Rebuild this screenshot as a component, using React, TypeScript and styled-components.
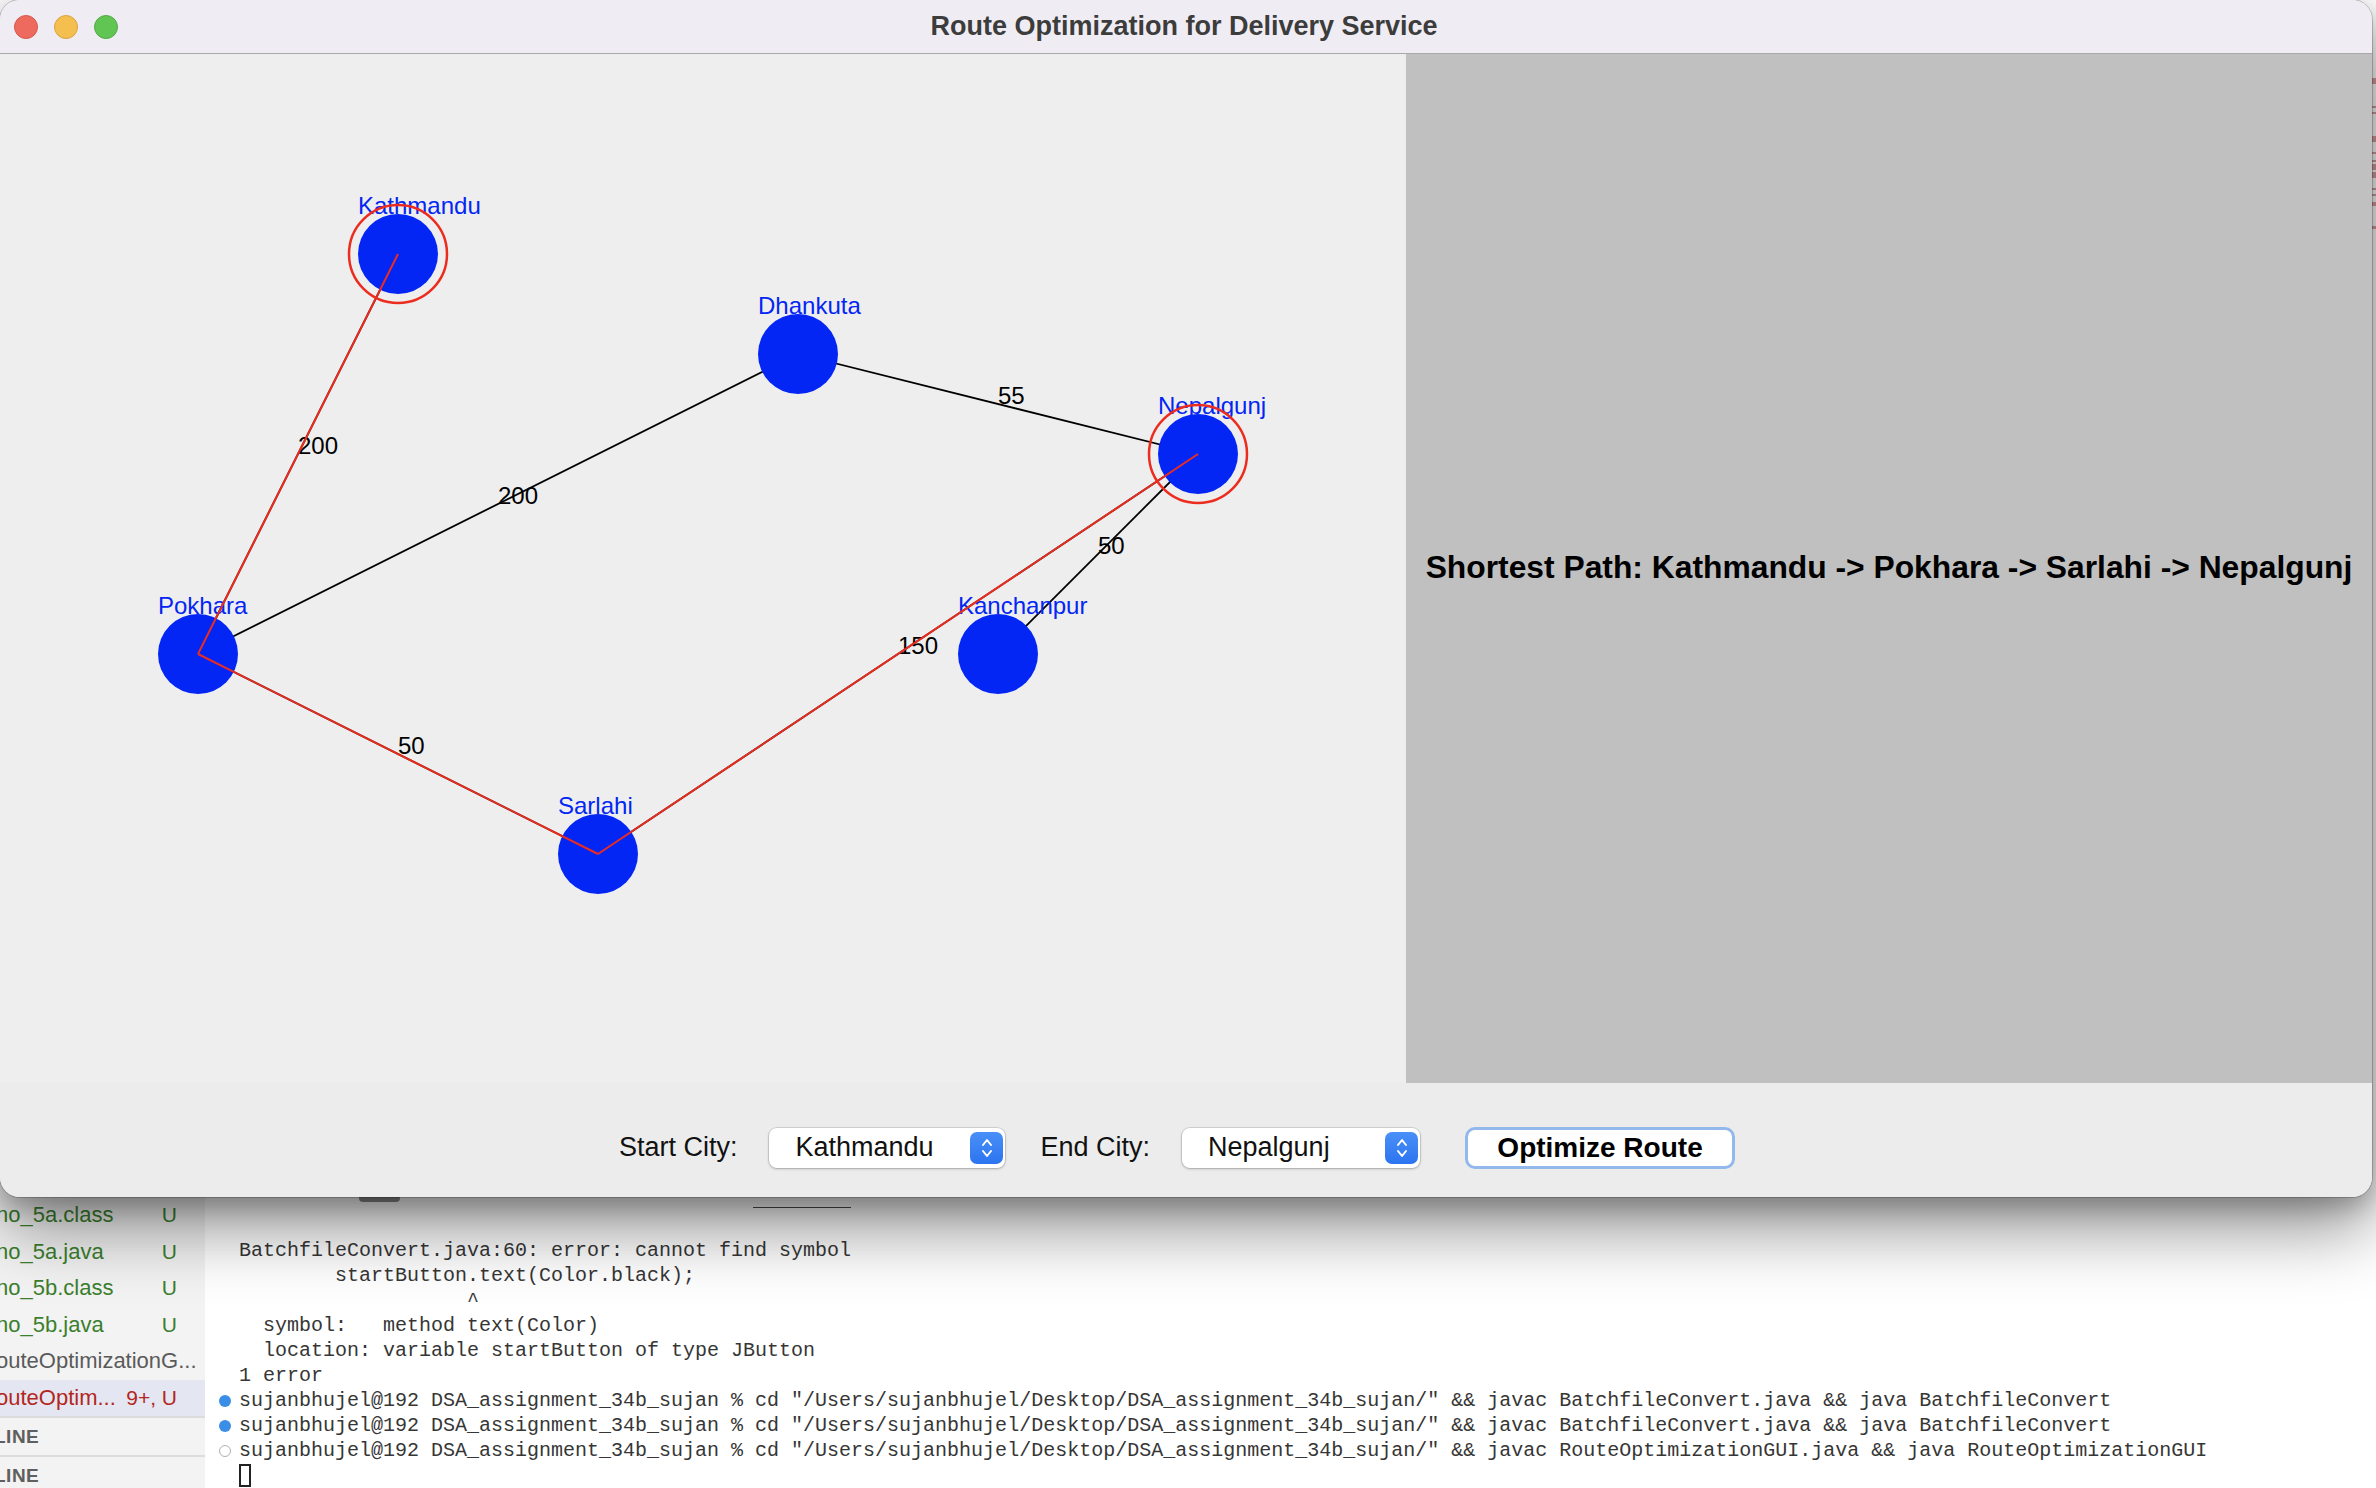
import React from "react";
import styled, { createGlobalStyle } from "styled-components";

const GlobalStyle = createGlobalStyle`
  html, body {
    margin: 0;
    padding: 0;
  }
  body {
    width: 2376px;
    height: 1488px;
    overflow: hidden;
    background: #ffffff;
    font-family: "Liberation Sans", Arial, sans-serif;
  }
`;

const Screen = styled.div`
  position: relative;
  width: 2376px;
  height: 1488px;
  overflow: hidden;
  background: #ffffff;
`;

/* ---------- editor behind the window ---------- */

const Workbench = styled.div`
  display: flex;
  flex-direction: column;
  height: 100%;
`;

const EditorArea = styled.div`
  height: 1197px;
  flex: 0 0 1197px;
  display: flex;
  justify-content: flex-end;
  background: #ffffff;
`;

const Minimap = styled.div`
  width: 4px;
  display: flex;
  flex-direction: column;
  padding-top: 78px;
`;

const MinimapMark = styled.div<{ $top: number; $h: number }>`
  margin-top: ${(p) => p.$top}px;
  height: ${(p) => p.$h}px;
  background: #d6a1a1;
`;

const PanelRow = styled.div`
  flex: 1;
  display: grid;
  grid-template-columns: 205px 1fr;
  min-height: 0;
`;

const Sidebar = styled.div`
  background: #f3f3f3;
  display: flex;
  flex-direction: column;
  padding-top: 198px;
  margin-top: -198px;
  overflow: hidden;
`;

const FileRow = styled.div<{ $active?: boolean }>`
  height: 36.5px;
  flex-shrink: 0;
  display: flex;
  align-items: center;
  justify-content: space-between;
  padding-right: 28px;
  background: ${(p) => (p.$active ? "#e4e6f1" : "transparent")};
  font-size: 22px;
  white-space: nowrap;
`;

const FileName = styled.span<{ $color: string }>`
  margin-left: -4px;
  flex-shrink: 0;
  color: ${(p) => p.$color};
`;

const Badge = styled.span<{ $color: string }>`
  color: ${(p) => p.$color};
  font-size: 21px;
`;

const SectionHeader = styled.div`
  height: 37px;
  flex-shrink: 0;
  display: flex;
  align-items: center;
  border-top: 2px solid #dcdcdc;
  margin-left: -6px;
  font-size: 19px;
  font-weight: bold;
  color: #5f5f5f;
  letter-spacing: 0.5px;
`;

const Terminal = styled.div`
  background: #ffffff;
  display: flex;
  flex-direction: column;
  font-family: "Liberation Mono", "DejaVu Sans Mono", monospace;
  font-size: 20px;
  color: #363636;
`;

const TerminalTop = styled.div`
  height: 11px;
  flex-shrink: 0;
  display: flex;
`;

const Sash = styled.div`
  margin-left: 154px;
  width: 41px;
  height: 5px;
  border-radius: 0 0 4px 4px;
  background: #8a8a8a;
`;

const TabUnderline = styled.div`
  margin-left: 353px;
  align-self: flex-end;
  width: 98px;
  height: 1.5px;
  background: #4a4a4a;
`;

const TerminalBody = styled.div`
  padding: 30px 0 0 10px;
`;

const TermLine = styled.div`
  height: 25px;
  display: flex;
  align-items: center;
  white-space: pre;
`;

const Gutter = styled.div`
  width: 24px;
  display: flex;
  justify-content: center;
  align-items: center;
  margin-left: -2px;
  margin-right: 2px;
`;

const Dot = styled.div<{ $hollow?: boolean }>`
  width: 12px;
  height: 12px;
  border-radius: 50%;
  box-sizing: border-box;
  background: ${(p) => (p.$hollow ? "transparent" : "#3a8ee6")};
  border: ${(p) => (p.$hollow ? "1.5px solid #b0b0b0" : "none")};
`;

const Cursor = styled.div`
  width: 12px;
  height: 23px;
  box-sizing: border-box;
  border: 2px solid #222;
`;

/* ---------- the Java window ---------- */

const Window = styled.div`
  position: absolute;
  top: 0;
  left: 0;
  width: 2372px;
  height: 1197px;
  border-radius: 20px;
  overflow: hidden;
  display: flex;
  flex-direction: column;
  background: #ececec;
  box-shadow: 0 0 0 1px rgba(0, 0, 0, 0.2), 0 30px 70px rgba(0, 0, 0, 0.45),
    0 10px 24px rgba(0, 0, 0, 0.22);
`;

const TitleBar = styled.div`
  height: 53px;
  flex: 0 0 53px;
  display: grid;
  grid-template-columns: 1fr auto 1fr;
  align-items: center;
  background: #efedf3;
  border-bottom: 1px solid #a8a8a8;
`;

const Lights = styled.div`
  display: flex;
  gap: 16px;
  padding-left: 14px;
`;

const Light = styled.div<{ $fill: string; $edge: string }>`
  width: 24px;
  height: 24px;
  border-radius: 50%;
  box-sizing: border-box;
  background: ${(p) => p.$fill};
  border: 1px solid ${(p) => p.$edge};
`;

const Title = styled.div`
  font-size: 27px;
  font-weight: bold;
  color: #3c3c3c;
  margin-left: -4px;
`;

const Body = styled.div`
  flex: 0 0 1025px;
  display: flex;
`;

const GraphPanel = styled.div`
  flex: 1;
  background: #eeeeee;
  overflow: hidden;
`;

const PathPanel = styled.div`
  width: 966px;
  background: #c0c0c0;
  display: flex;
  align-items: center;
  justify-content: center;
`;

const PathText = styled.div`
  font-size: 31.8px;
  font-weight: bold;
  color: #000;
  white-space: nowrap;
  padding-bottom: 2px;
`;

const ControlBar = styled.div`
  flex: 1;
  display: flex;
  align-items: center;
  justify-content: center;
  gap: 32px;
  padding: 15px 18px 0 0;
  background: #ececec;
`;

const FieldLabel = styled.span<{ $extra?: number }>`
  margin-left: ${(p) => p.$extra ?? 0}px;
  font-size: 27px;
  color: #111;
`;

const Combo = styled.div<{ $w: number }>`
  width: ${(p) => p.$w}px;
  height: 40px;
  box-sizing: border-box;
  display: flex;
  align-items: center;
  justify-content: space-between;
  padding: 0 2px 0 26px;
  background: #ffffff;
  border-radius: 8px;
  box-shadow: 0 0 0 1px rgba(0, 0, 0, 0.1), 0 1px 3px rgba(0, 0, 0, 0.22);
  font-size: 27px;
  color: #111;
`;

const Stepper = styled.div`
  width: 33px;
  height: 32px;
  border-radius: 7px;
  background: linear-gradient(#4a90f8, #2c74f0);
  display: flex;
  align-items: center;
  justify-content: center;
`;

const ActionButton = styled.button`
  margin-left: 13px;
  width: 270px;
  height: 42px;
  box-sizing: border-box;
  border: 3px solid #93b8ec;
  border-radius: 10px;
  background: #ffffff;
  font-family: "Liberation Sans", Arial, sans-serif;
  font-size: 28px;
  font-weight: bold;
  color: #000;
  padding: 0;
`;

/* ---------- graph data ---------- */

type City = "Kathmandu" | "Dhankuta" | "Nepalgunj" | "Pokhara" | "Kanchanpur" | "Sarlahi";

const cities: Record<City, [number, number]> = {
  Kathmandu: [398, 200],
  Dhankuta: [798, 300],
  Nepalgunj: [1198, 400],
  Pokhara: [198, 600],
  Kanchanpur: [998, 600],
  Sarlahi: [598, 800],
};

const edges: [City, City, number][] = [
  ["Kathmandu", "Pokhara", 200],
  ["Pokhara", "Dhankuta", 200],
  ["Dhankuta", "Nepalgunj", 55],
  ["Kanchanpur", "Nepalgunj", 50],
  ["Pokhara", "Sarlahi", 50],
  ["Sarlahi", "Nepalgunj", 150],
];

const path: City[] = ["Kathmandu", "Pokhara", "Sarlahi", "Nepalgunj"];

const BLUE = "#0326f5";
const RED = "#ec2c1f";

const Graph = () => {
  const names = Object.keys(cities) as City[];
  return (
    <svg width="1406" height="1025" viewBox="0 0 1406 1025">
      {edges.map(([a, b]) => (
        <line
          key={a + b}
          x1={cities[a][0]}
          y1={cities[a][1]}
          x2={cities[b][0]}
          y2={cities[b][1]}
          stroke="#000"
          strokeWidth={1.8}
        />
      ))}
      {names.map((n) => (
        <circle key={n} cx={cities[n][0]} cy={cities[n][1]} r={40} fill={BLUE} />
      ))}
      {names.map((n) => (
        <text
          key={n + "-label"}
          x={cities[n][0] - 40}
          y={cities[n][1] - 40}
          fill={BLUE}
          fontSize={24}
          fontFamily="'Liberation Sans', Arial, sans-serif"
        >
          {n}
        </text>
      ))}
      {edges.map(([a, b, w]) => (
        <text
          key={a + b + "-w"}
          x={Math.floor((cities[a][0] + cities[b][0]) / 2)}
          y={Math.floor((cities[a][1] + cities[b][1]) / 2)}
          fill="#000"
          fontSize={24}
          fontFamily="'Liberation Sans', Arial, sans-serif"
        >
          {w}
        </text>
      ))}
      {path.slice(1).map((n, i) => (
        <line
          key={"p" + n}
          x1={cities[path[i]][0]}
          y1={cities[path[i]][1]}
          x2={cities[n][0]}
          y2={cities[n][1]}
          stroke={RED}
          strokeWidth={2}
        />
      ))}
      {[path[0], path[path.length - 1]].map((n) => (
        <circle
          key={"ring" + n}
          cx={cities[n][0]}
          cy={cities[n][1]}
          r={49}
          fill="none"
          stroke={RED}
          strokeWidth={2.5}
        />
      ))}
    </svg>
  );
};

const Chevrons = () => (
  <svg width="14" height="24" viewBox="0 0 14 24">
    <polyline points="3,9 7,4 11,9" fill="none" stroke="#fff" strokeWidth="2" strokeLinecap="round" strokeLinejoin="round" />
    <polyline points="3,15 7,20 11,15" fill="none" stroke="#fff" strokeWidth="2" strokeLinecap="round" strokeLinejoin="round" />
  </svg>
);

const files = [
  { name: "no_5a.class", badge: "U", color: "#3b7f2e", badgeColor: "#3b7f2e" },
  { name: "no_5a.java", badge: "U", color: "#3b7f2e", badgeColor: "#3b7f2e" },
  { name: "no_5b.class", badge: "U", color: "#3b7f2e", badgeColor: "#3b7f2e" },
  { name: "no_5b.java", badge: "U", color: "#3b7f2e", badgeColor: "#3b7f2e" },
  { name: "outeOptimizationG...", badge: "", color: "#5a5a5a", badgeColor: "#5a5a5a" },
  { name: "outeOptim...", badge: "9+, U", color: "#b3261e", badgeColor: "#b3261e", active: true },
];

const runCmd = (cls: string) =>
  `sujanbhujel@192 DSA_assignment_34b_sujan % cd "/Users/sujanbhujel/Desktop/DSA_assignment_34b_sujan/" && javac ${cls}.java && java ${cls}`;

const termLines: { text: string; dot?: "fill" | "hollow" }[] = [
  { text: "BatchfileConvert.java:60: error: cannot find symbol" },
  { text: "        startButton.text(Color.black);" },
  { text: "                   ^" },
  { text: "  symbol:   method text(Color)" },
  { text: "  location: variable startButton of type JButton" },
  { text: "1 error" },
  { text: runCmd("BatchfileConvert"), dot: "fill" },
  { text: runCmd("BatchfileConvert"), dot: "fill" },
  { text: runCmd("RouteOptimizationGUI"), dot: "hollow" },
];

const minimapMarks: [number, number][] = [
  [0, 6], [22, 2], [4, 2], [22, 6], [10, 2], [6, 2], [2, 6], [2, 6], [10, 2], [4, 2], [6, 4], [20, 3],
];

const App = () => {
  return (
    <>
      <GlobalStyle />
      <Screen>
        <Workbench>
          <EditorArea>
            <Minimap>
              {minimapMarks.map(([t, h], i) => (
                <MinimapMark key={i} $top={t} $h={h} />
              ))}
            </Minimap>
          </EditorArea>
          <PanelRow>
            <Sidebar>
              {files.map((f) => (
                <FileRow key={f.name} $active={f.active}>
                  <FileName $color={f.color}>{f.name}</FileName>
                  <Badge $color={f.badgeColor}>{f.badge}</Badge>
                </FileRow>
              ))}
              <SectionHeader>LINE</SectionHeader>
              <SectionHeader>LINE</SectionHeader>
            </Sidebar>
            <Terminal>
              <TerminalTop>
                <Sash />
                <TabUnderline />
              </TerminalTop>
              <TerminalBody>
                {termLines.map((l, i) => (
                  <TermLine key={i}>
                    <Gutter>{l.dot && <Dot $hollow={l.dot === "hollow"} />}</Gutter>
                    {l.text}
                  </TermLine>
                ))}
                <TermLine>
                  <Gutter />
                  <Cursor />
                </TermLine>
              </TerminalBody>
            </Terminal>
          </PanelRow>
        </Workbench>

        <Window>
          <TitleBar>
            <Lights>
              <Light $fill="#ee6a5f" $edge="#d5574c" />
              <Light $fill="#f5bf4f" $edge="#d8a33f" />
              <Light $fill="#61c554" $edge="#52a945" />
            </Lights>
            <Title>Route Optimization for Delivery Service</Title>
            <div />
          </TitleBar>
          <Body>
            <GraphPanel>
              <Graph />
            </GraphPanel>
            <PathPanel>
              <PathText>Shortest Path: Kathmandu -&gt; Pokhara -&gt; Sarlahi -&gt; Nepalgunj</PathText>
            </PathPanel>
          </Body>
          <ControlBar>
            <FieldLabel>Start City:</FieldLabel>
            <Combo $w={236}>
              Kathmandu
              <Stepper>
                <Chevrons />
              </Stepper>
            </Combo>
            <FieldLabel $extra={3}>End City:</FieldLabel>
            <Combo $w={238}>
              Nepalgunj
              <Stepper>
                <Chevrons />
              </Stepper>
            </Combo>
            <ActionButton>Optimize Route</ActionButton>
          </ControlBar>
        </Window>
      </Screen>
    </>
  );
};

export default App;
